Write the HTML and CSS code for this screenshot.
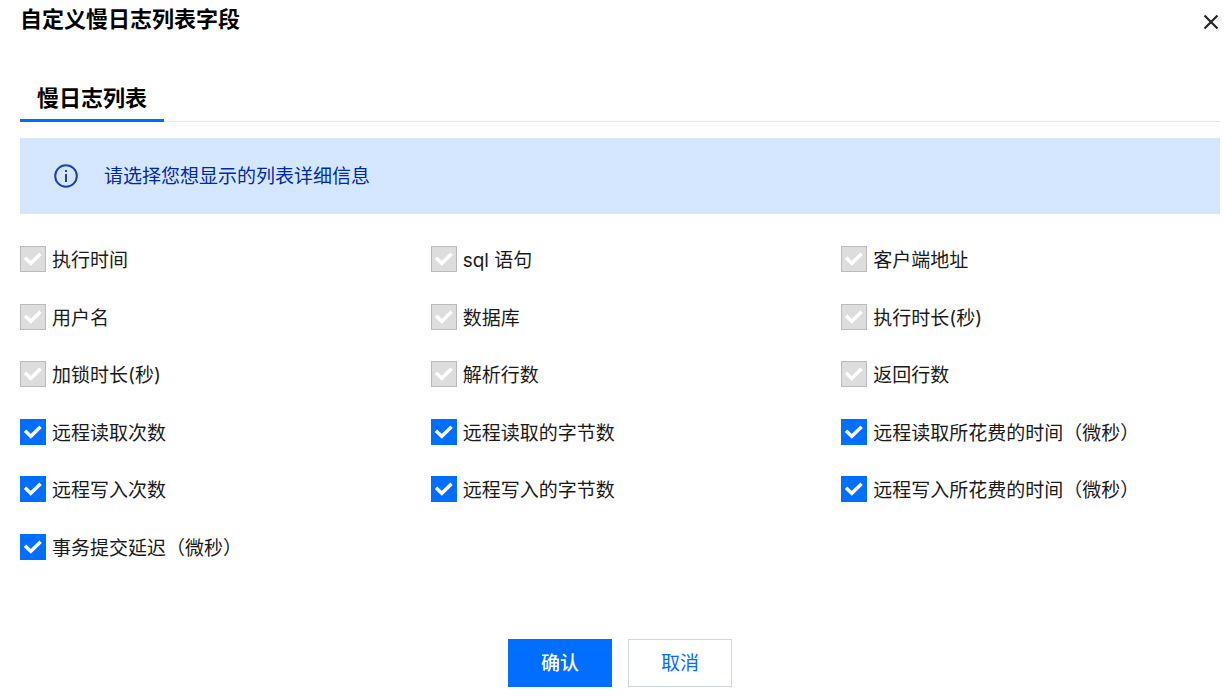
FILE: index.html
```html
<!DOCTYPE html>
<html lang="zh-CN">
<head>
    <meta charset="UTF-8">
    <meta name="viewport" content="width=device-width, initial-scale=1.0">
    <title>自定义慢日志列表字段</title>
    <link rel="stylesheet" href="styles.css">
</head>
<body>
    <div class="dialog" role="dialog" aria-labelledby="dialog-title">
        <header class="dialog-header">
            <h1 id="dialog-title">自定义慢日志列表字段</h1>
            <button class="close" type="button" aria-label="关闭">
                <svg width="16" height="16" viewBox="0 0 16 16">
                    <path d="M1.5 1.5L14.5 14.5M14.5 1.5L1.5 14.5" fill="none" stroke="#262626" stroke-width="2.2"/>
                </svg>
            </button>
        </header>

        <nav class="tabs">
            <a href="#slow-log" class="tab active">慢日志列表</a>
        </nav>

        <div class="alert">
            <svg class="alert-icon" width="24" height="24" viewBox="0 0 24 24">
                <circle cx="12" cy="12" r="10.8" fill="none" stroke="#1a3fb8" stroke-width="2"/>
                <path d="M12 10v8M12 6v2" fill="none" stroke="#1a3fb8" stroke-width="2"/>
            </svg>
            <p>请选择您想显示的列表详细信息</p>
        </div>

        <form id="slow-log">
            <div class="fields">
                <!-- Required fields, always shown -->
                <label class="field"><input type="checkbox" checked disabled>执行时间</label>
                <label class="field"><input type="checkbox" checked disabled>sql 语句</label>
                <label class="field"><input type="checkbox" checked disabled>客户端地址</label>
                <label class="field"><input type="checkbox" checked disabled>用户名</label>
                <label class="field"><input type="checkbox" checked disabled>数据库</label>
                <label class="field"><input type="checkbox" checked disabled>执行时长(秒)</label>
                <label class="field"><input type="checkbox" checked disabled>加锁时长(秒)</label>
                <label class="field"><input type="checkbox" checked disabled>解析行数</label>
                <label class="field"><input type="checkbox" checked disabled>返回行数</label>

                <!-- Optional fields -->
                <label class="field"><input type="checkbox" checked>远程读取次数</label>
                <label class="field"><input type="checkbox" checked>远程读取的字节数</label>
                <label class="field"><input type="checkbox" checked>远程读取所花费的时间（微秒）</label>
                <label class="field"><input type="checkbox" checked>远程写入次数</label>
                <label class="field"><input type="checkbox" checked>远程写入的字节数</label>
                <label class="field"><input type="checkbox" checked>远程写入所花费的时间（微秒）</label>
                <label class="field"><input type="checkbox" checked>事务提交延迟（微秒）</label>
            </div>

            <footer class="actions">
                <button class="btn btn-primary" type="submit">确认</button>
                <button class="btn" type="button">取消</button>
            </footer>
        </form>
    </div>
</body>
</html>
```
FILE: styles.css
```css
* {
    box-sizing: border-box;
}

body {
    margin: 0;
    background-color: #fff;
    color: #1a1a1a;
    font-family: Inter, "Noto Sans CJK SC", sans-serif;
    font-size: 19px;
    line-height: 26px;
}

.dialog {
    padding: 3px 6px 8px 20px;
}

/* Header */
.dialog-header {
    display: flex;
    justify-content: space-between;
    align-items: flex-end;
    margin-bottom: 41px;
}

h1 {
    margin: 0;
    color: #000;
    font-size: 22px;
    font-weight: 600;
    line-height: 32px;
}

.close {
    display: flex;
    padding: 5px 1px;
    border: none;
    background: none;
    cursor: pointer;
}

/* Tabs */
.tabs {
    display: flex;
    margin-bottom: 16px;
    box-shadow: inset 0 -1px #e7e7e7;
}

.tab {
    padding: 6px 17px 5px;
    border-bottom: 3px solid transparent;
    color: #000;
    font-size: 22px;
    font-weight: 600;
    line-height: 32px;
    text-decoration: none;
}

.tab.active {
    border-bottom-color: #006eff;
}

/* Info message */
.alert {
    display: flex;
    align-items: flex-start;
    gap: 26px;
    margin-bottom: 32px;
    padding: 26px 34px 24px;
    background-color: #d5e7ff;
    color: #0029a8;
}

.alert p {
    margin: 0;
}

/* Field list */
.fields {
    display: grid;
    grid-template-columns: repeat(3, 1fr);
    column-gap: 32px;
    align-content: space-between;
    min-height: 318px;
    margin-bottom: 75px;
}

.field {
    display: flex;
    align-items: flex-start;
    gap: 6px;
    line-height: 30px;
}

.field input {
    flex: none;
    appearance: none;
    width: 26px;
    height: 26px;
    margin: 0;
    border: 1px solid #bbb;
    background-color: #fff;
}

.field input:checked {
    border-color: #006eff;
    background: #006eff url("data:image/svg+xml,%3Csvg xmlns='http://www.w3.org/2000/svg' viewBox='0 0 24 24'%3E%3Cpath d='M4 10.7L9.8 16.3L19.6 6.7' fill='none' stroke='white' stroke-width='3.4'/%3E%3C/svg%3E") center / 24px no-repeat;
}

.field input:disabled {
    border-color: #bbb;
    background-color: #ddd;
}

/* Buttons */
.actions {
    display: flex;
    justify-content: center;
    gap: 16px;
}

.btn {
    width: 104px;
    height: 48px;
    padding: 2px 0 0;
    border: 1px solid #cfd5de;
    background-color: #fff;
    color: #006eff;
    font: inherit;
    cursor: pointer;
}

.btn-primary {
    border-color: #006eff;
    background-color: #006eff;
    color: #fff;
    font-weight: 500;
}
```
